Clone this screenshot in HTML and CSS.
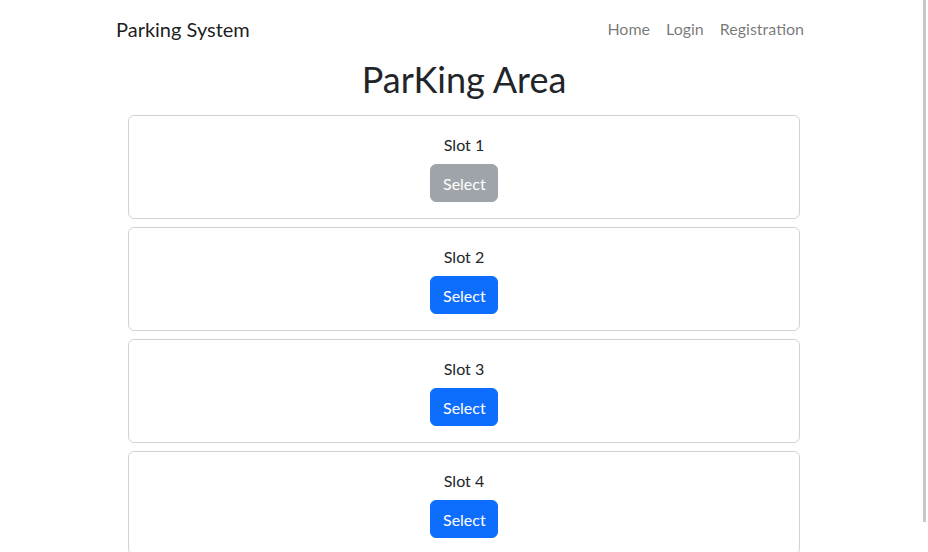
FILE: index.html
```html
<!DOCTYPE html>
<html lang="en">
<head>
<meta charset="utf-8">
<title>Parking System</title>
<link rel="stylesheet" href="styles.css">
</head>
<body>
<nav class="navbar">
  <div class="container nav-inner">
    <a class="brand" href="#">Parking System</a>
    <ul class="nav-links">
      <li><a class="nav-link" href="#">Home</a></li>
      <li><a class="nav-link" href="#">Login</a></li>
      <li><a class="nav-link" href="#">Registration</a></li>
    </ul>
  </div>
</nav>
<main class="container">
  <h1 class="title">ParKing Area</h1>
  <div class="slots">
    <div class="card"><p class="slot-name">Slot 1</p><button class="btn btn-disabled" disabled>Select</button></div>
    <div class="card"><p class="slot-name">Slot 2</p><button class="btn btn-primary">Select</button></div>
    <div class="card"><p class="slot-name">Slot 3</p><button class="btn btn-primary">Select</button></div>
    <div class="card"><p class="slot-name">Slot 4</p><button class="btn btn-primary">Select</button></div>
  </div>
</main>
<div class="scrollbar"></div>
</body>
</html>
```

FILE: styles.css
```css
* { box-sizing: border-box; }
html, body { margin: 0; padding: 0; }
body {
  font-family: Lato, "Open Sans", "Noto Sans", sans-serif;
  font-size: 16px;
  line-height: 1.5;
  color: #212529;
  background: #fff;
  overflow: hidden;
  height: 552px;
}
.container {
  width: 720px;
  margin: 0 auto;
  padding: 0 12px;
}
.navbar {
  padding: 8px 0;
}
.nav-inner {
  display: flex;
  align-items: center;
  justify-content: space-between;
  height: 40px;
}
.brand {
  font-size: 20px;
  line-height: 30px;
  padding: 6px 0 4px;
  color: rgba(0,0,0,.9);
  text-decoration: none;
}
.nav-links {
  display: flex;
  list-style: none;
  margin: 0;
  padding: 0;
}
.nav-link {
  display: block;
  padding: 9px 8px 7px;
  line-height: 24px;
  color: rgba(0,0,0,.55);
  text-decoration: none;
}
.title {
  margin: 2px 0 0;
  text-align: center;
  font-size: 36px;
  font-weight: 400;
  line-height: 43px;
}
.slots {
  padding: 0 12px;
  margin-top: 14px;
  display: flex;
  flex-direction: column;
  gap: 8px;
}
.card {
  border: 1px solid rgba(0,0,0,.175);
  border-radius: 6px;
  padding: 16px;
  text-align: center;
  height: 104px;
}
.slot-name {
  margin: 0 0 7px;
  padding-top: 1px;
  line-height: 24px;
}
.btn {
  font-family: inherit;
  font-size: 16px;
  line-height: 24px;
  padding: 7px 12px 5px;
  border: 1px solid transparent;
  border-radius: 6px;
  color: #fff;
  width: 68px;
  height: 38px;
}
.btn-primary {
  background: #0d6efd;
  border-color: #0d6efd;
}
.btn-disabled {
  background: #6c757d;
  border-color: #6c757d;
  opacity: .65;
}
.scrollbar {
  position: fixed;
  left: 923px;
  top: 0;
  width: 3px;
  height: 522px;
  background: #c8c8c8;
}
```
